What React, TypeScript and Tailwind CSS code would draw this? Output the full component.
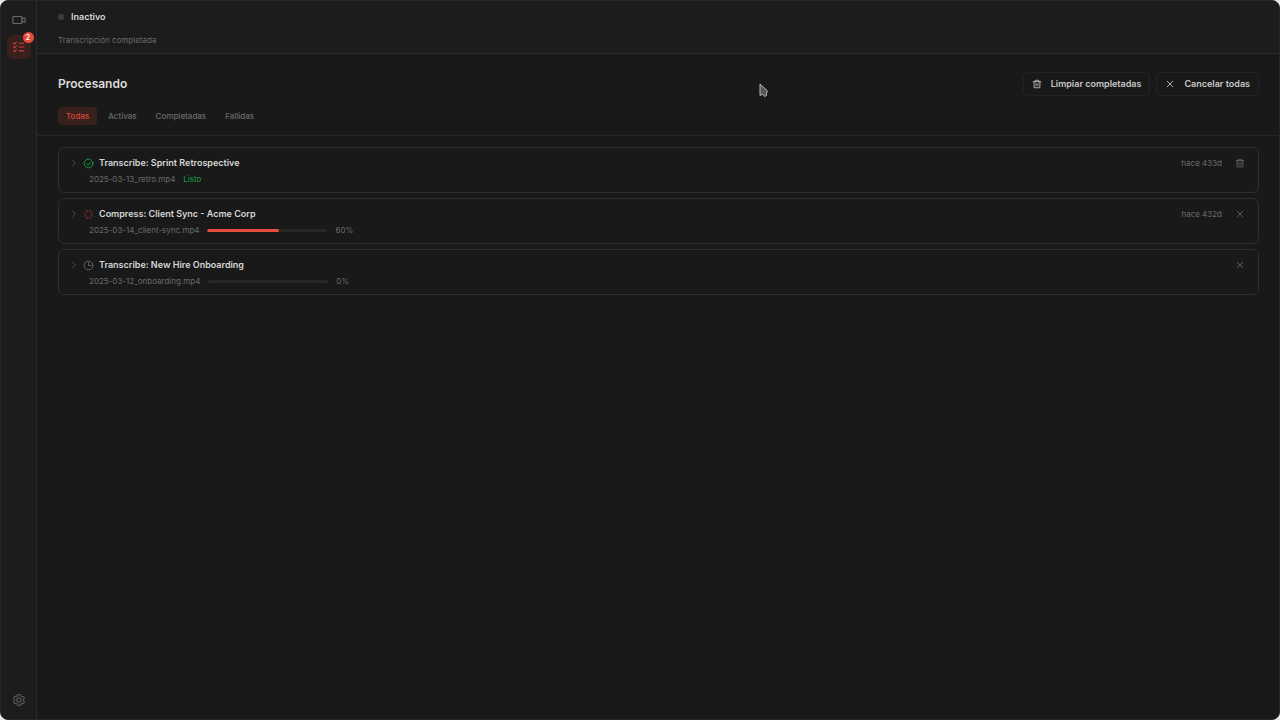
import { useState, type ReactNode } from "react";
import { PiGearSix } from "react-icons/pi";

type IconProps = { className?: string; children?: ReactNode };

function Icon({ className = "", children }: IconProps) {
  return (
    <svg
      viewBox="0 0 24 24"
      fill="none"
      stroke="currentColor"
      strokeWidth="2"
      strokeLinecap="round"
      strokeLinejoin="round"
      aria-hidden="true"
      className={"shrink-0 " + className}
    >
      {children}
    </svg>
  );
}

const VideoIcon = () => (
  <Icon className="size-[14px]">
    <rect x="1.5" y="6" width="15.5" height="12" rx="1.5" />
    <path d="M17 10l3-1.500h2.500v7H20L17 14" />
  </Icon>
);

const ChecksIcon = () => (
  <Icon className="size-[14px]">
    <path d="M2.5 5.500l1.500 1.500L7.500 3.500M2.500 12l1.500 1.500L7.500 10M2.500 18.500l1.500 1.500L7.500 16.500M12 5.500h8.500M12 12h8.500M12 18.500h8.500" />
  </Icon>
);

const TrashIcon = () => (
  <Icon className="size-[10px]">
    <path d="M3 6.500h18M8 6V3h8v3M5 6.500V21h14V6.500M9.700 11v5.500M14.300 11v5.500" />
  </Icon>
);

const CloseIcon = () => (
  <Icon className="size-[10px]">
    <path d="M5.500 5.500l13 13M18.500 5.500l-13 13" />
  </Icon>
);

const CaretIcon = () => (
  <Icon className="size-2">
    <path d="M8 4l8 8-8 8" />
  </Icon>
);

const DoneIcon = () => (
  <Icon className="size-[11px] text-[#15a34a]">
    <circle cx="12" cy="12" r="9.500" />
    <path d="M8 12.500l3 3 5.500-6" />
  </Icon>
);

const SpinnerIcon = () => (
  <Icon className="size-[11px] text-[#a83a30]">
    <g transform="rotate(22.5 12 12)">
      <path d="M12 2.500v3M12 18.500v3M2.500 12h3M18.500 12h3M5.300 5.300l2.100 2.100M16.600 16.600l2.100 2.100M5.300 18.700l2.100-2.100M16.600 7.400l2.100-2.100" />
    </g>
  </Icon>
);

const ClockIcon = () => (
  <Icon className="size-[11px] text-[#6a6a6a]">
    <circle cx="12" cy="12" r="9.500" />
    <path d="M12 6.500V12h5" />
  </Icon>
);

type Status = "done" | "running" | "queued";
type Job = { title: string; file: string; status: Status; progress: number; age?: string };

const jobs: Job[] = [
  { title: "Transcribe: Sprint Retrospective", file: "2025-03-13_retro.mp4", status: "done", progress: 100, age: "hace 433d" },
  { title: "Compress: Client Sync - Acme Corp", file: "2025-03-14_client-sync.mp4", status: "running", progress: 60, age: "hace 432d" },
  { title: "Transcribe: New Hire Onboarding", file: "2025-03-12_onboarding.mp4", status: "queued", progress: 0 },
];

const tabs = ["Todas", "Activas", "Completadas", "Fallidas"];

function JobCard({ job }: { job: Job }) {
  return (
    <li className="flex items-start justify-between rounded-md border border-[#2e2e2e] pt-2 pr-[10px] pb-[7px] pl-[11px]">
      <div>
        <div className="flex h-[14px] items-center">
          <button aria-label={"Expandir " + job.title} className="mr-[5px] w-2 text-[#6a6a6a]">
            <CaretIcon />
          </button>
          {job.status === "done" && <DoneIcon />}
          {job.status === "running" && <SpinnerIcon />}
          {job.status === "queued" && <ClockIcon />}
          <h2 className="ml-[5px] text-[9px] leading-[14px] font-semibold text-[#d6d6d6]">{job.title}</h2>
        </div>
        <div className="mt-[3px] ml-[19px] flex h-3 items-center gap-2 text-[8px] leading-3 text-[#6a6a6a]">
          <span>{job.file}</span>
          {job.status === "done" ? (
            <span className="text-[#15a34a]">Listo</span>
          ) : (
            <>
              <span
                role="progressbar"
                aria-label={job.title}
                aria-valuenow={job.progress}
                className="block h-[3px] w-[120px] overflow-hidden rounded-full bg-[#272727]"
              >
                <span className="block h-full rounded-full bg-[#e54d3c]" style={{ width: job.progress + "%" }} />
              </span>
              <span>{job.progress}%</span>
            </>
          )}
        </div>
      </div>
      <div className="flex h-[14px] items-center gap-[13px] pr-[3px] text-[8px] leading-3 text-[#6a6a6a]">
        {job.age && <span>{job.age}</span>}
        <button aria-label={(job.status === "done" ? "Eliminar " : "Cancelar ") + job.title}>
          {job.status === "done" ? <TrashIcon /> : <CloseIcon />}
        </button>
      </div>
    </li>
  );
}

export default function App() {
  const [active, setActive] = useState("Todas");

  return (
    <div className="min-h-screen bg-[#e8e8e8] font-['Inter',sans-serif]">
      <div className="flex min-h-screen overflow-hidden rounded-lg border border-[#262626] bg-[#191919]">
        <nav aria-label="Principal" className="flex w-9 shrink-0 flex-col items-center border-r border-[#2c2c2c] bg-[#1c1c1c] pt-[7px] pb-[7px]">
          <button aria-label="Grabaciones" className="flex size-6 items-center justify-center text-[#6a6a6a]">
            <VideoIcon />
          </button>
          <button aria-label="Procesando" className="relative mt-[3px] flex size-6 items-center justify-center rounded-md bg-[#38201d] text-[#c94236]">
            <ChecksIcon />
            <span className="absolute -top-[3px] -right-[3px] flex size-[11px] items-center justify-center rounded-full bg-[#e54d3c] text-[7px] leading-none font-medium text-white">
              2
            </span>
          </button>
          <button aria-label="Ajustes" className="mt-auto flex size-6 items-center justify-center text-[#6a6a6a]">
            <PiGearSix className="size-[14px] rotate-[30deg]" aria-hidden="true" />
          </button>
        </nav>

        <main className="min-w-0 flex-1">
          <header className="border-b border-[#2c2c2c] bg-[#1c1c1c] px-[21px] pt-[9px] pb-[7px]">
            <div className="flex h-[14px] items-center gap-[7px] text-[9px] leading-[14px] font-semibold text-[#d6d6d6]">
              <span className="size-[6px] rounded-[2px] bg-[#3a3a3a]" />
              Inactivo
            </div>
            <p className="mt-[10px] text-[8px] leading-3 text-[#6a6a6a]">Transcripción completada</p>
          </header>

          <section className="border-b border-[#272727] pt-[18px] pr-[20px] pb-[10px] pl-[21px]">
            <div className="flex items-center justify-between">
              <h1 className="text-[12px] leading-6 font-semibold text-[#dcdcdc]">Procesando</h1>
              <div className="flex gap-[6px] text-[9px] font-semibold text-[#c8c8c8]">
                <button className="flex h-6 items-center gap-[9px] rounded-[5px] border border-[#242424] px-2">
                  <TrashIcon />
                  Limpiar completadas
                </button>
                <button className="flex h-6 items-center gap-[9px] rounded-[5px] border border-[#242424] px-2">
                  <CloseIcon />
                  Cancelar todas
                </button>
              </div>
            </div>
            <div role="tablist" className="mt-[11px] flex gap-[3px] text-[8px] leading-[18px] font-medium">
              {tabs.map((tab) => (
                <button
                  key={tab}
                  role="tab"
                  aria-selected={active === tab}
                  onClick={() => setActive(tab)}
                  className={active === tab ? "rounded-sm bg-[#38201d] px-2 text-[#dc4a3a]" : "rounded-sm px-2 text-[#6a6a6a]"}
                >
                  {tab}
                </button>
              ))}
            </div>
          </section>

          <ul className="flex flex-col gap-[5px] py-[11px] pr-[20px] pl-[21px]">
            {jobs.map((job) => (
              <JobCard key={job.title} job={job} />
            ))}
          </ul>
        </main>
      </div>

      <svg aria-hidden="true" viewBox="0 0 10 16" className="pointer-events-none absolute top-[83px] left-[759px] h-4 w-[10px]">
        <path d="M1 1v11.500l2.500-1.500 2 2.500 2-1V10L8.500 8z" fill="#555555" stroke="#b8b8b8" strokeWidth="1" strokeLinejoin="round" />
      </svg>
    </div>
  );
}
